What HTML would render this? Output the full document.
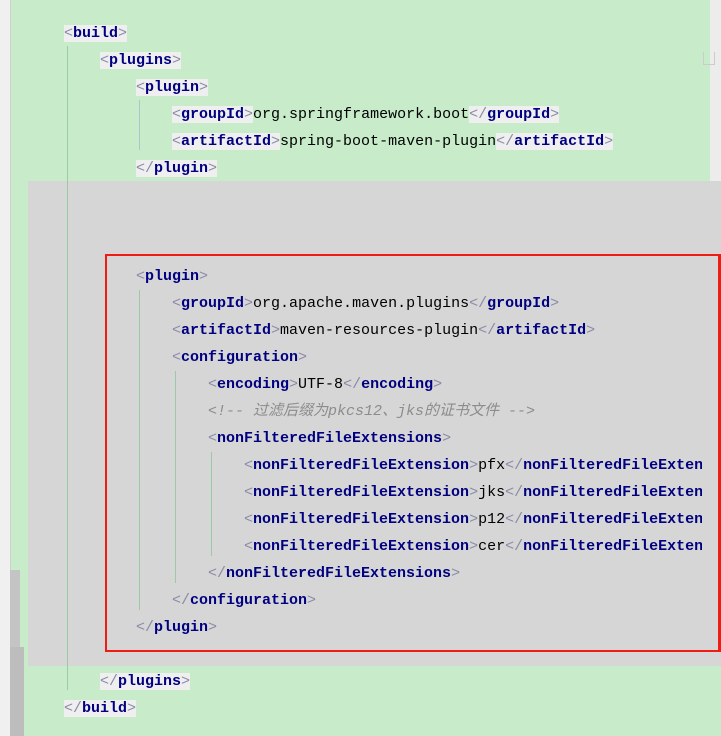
<!DOCTYPE html>
<html><head><meta charset="utf-8"><style>
body{margin:0;width:721px;height:736px;overflow:hidden;background:#c8ecca;position:relative;font-family:"Liberation Mono","Noto Sans CJK SC",monospace;font-size:15px}
.g{position:absolute;left:0;top:0;width:10px;height:736px;background:#f0f0f0;border-right:1px solid #d0d0d0}
.r{position:absolute;left:710px;top:0;width:11px;height:181px;background:#ececec}
.gray{position:absolute;left:28px;top:181px;width:693px;height:485px;background:#d6d6d6}
.box{position:absolute;left:105px;top:254px;width:611px;height:394px;border:2px solid #f01c14;border-right-width:3px}
.l{position:absolute;height:27px;line-height:27px;white-space:pre;color:#000}
.t{background:#efefef}
b{color:#000080}
i.b{font-style:normal;color:#8a8aa8;font-weight:normal}
.c{color:#8c8c8c;font-style:italic}
.v{position:absolute;width:1px;background:#9ccaa6}
.v2{position:absolute;width:1px;background:#b0c4d0}
.thumb{position:absolute;left:10px;top:570px;width:10px;height:166px;background:#c4c4c4}
.thumb2{position:absolute;left:10px;top:647px;width:14px;height:89px;background:#bdbdbd}
</style></head><body>
<div class="g"></div><div class="r"></div>
<div style="position:absolute;left:703px;top:52px;width:10px;height:12px;border:1px solid #ccc;border-top:none"></div>
<div class="gray"></div>
<div class="thumb"></div><div class="thumb2"></div>
<div class="v" style="left:67px;top:46px;height:644px"></div>
<div class="v2" style="left:139px;top:100px;height:50px"></div>
<div class="v" style="left:139px;top:290px;height:320px"></div>
<div class="v" style="left:175px;top:371px;height:212px"></div>
<div class="v" style="left:211px;top:452px;height:104px"></div>
<div class="box"></div>

<div class="l" style="left:64px;top:20px"><span class="t"><i class="b">&lt;</i><b>build</b><i class="b">&gt;</i></span></div>
<div class="l" style="left:100px;top:47px"><span class="t"><i class="b">&lt;</i><b>plugins</b><i class="b">&gt;</i></span></div>
<div class="l" style="left:136px;top:74px"><span class="t"><i class="b">&lt;</i><b>plugin</b><i class="b">&gt;</i></span></div>
<div class="l" style="left:172px;top:101px"><span class="t"><i class="b">&lt;</i><b>groupId</b><i class="b">&gt;</i></span>org.springframework.boot<span class="t"><i class="b">&lt;/</i><b>groupId</b><i class="b">&gt;</i></span></div>
<div class="l" style="left:172px;top:128px"><span class="t"><i class="b">&lt;</i><b>artifactId</b><i class="b">&gt;</i></span>spring-boot-maven-plugin<span class="t"><i class="b">&lt;/</i><b>artifactId</b><i class="b">&gt;</i></span></div>
<div class="l" style="left:136px;top:155px"><span class="t"><i class="b">&lt;/</i><b>plugin</b><i class="b">&gt;</i></span></div>

<div class="l" style="left:136px;top:263px"><i class="b">&lt;</i><b>plugin</b><i class="b">&gt;</i></div>
<div class="l" style="left:172px;top:290px"><i class="b">&lt;</i><b>groupId</b><i class="b">&gt;</i>org.apache.maven.plugins<i class="b">&lt;/</i><b>groupId</b><i class="b">&gt;</i></div>
<div class="l" style="left:172px;top:317px"><i class="b">&lt;</i><b>artifactId</b><i class="b">&gt;</i>maven-resources-plugin<i class="b">&lt;/</i><b>artifactId</b><i class="b">&gt;</i></div>
<div class="l" style="left:172px;top:344px"><i class="b">&lt;</i><b>configuration</b><i class="b">&gt;</i></div>
<div class="l" style="left:208px;top:371px"><i class="b">&lt;</i><b>encoding</b><i class="b">&gt;</i>UTF-8<i class="b">&lt;/</i><b>encoding</b><i class="b">&gt;</i></div>
<div class="l c" style="left:208px;top:398px">&lt;!-- 过滤后缀为pkcs12、jks的证书文件 --&gt;</div>
<div class="l" style="left:208px;top:425px"><i class="b">&lt;</i><b>nonFilteredFileExtensions</b><i class="b">&gt;</i></div>
<div class="l" style="left:244px;top:452px;width:458px;overflow:hidden"><i class="b">&lt;</i><b>nonFilteredFileExtension</b><i class="b">&gt;</i>pfx<i class="b">&lt;/</i><b>nonFilteredFileExtension</b></div>
<div class="l" style="left:244px;top:479px;width:458px;overflow:hidden"><i class="b">&lt;</i><b>nonFilteredFileExtension</b><i class="b">&gt;</i>jks<i class="b">&lt;/</i><b>nonFilteredFileExtension</b></div>
<div class="l" style="left:244px;top:506px;width:458px;overflow:hidden"><i class="b">&lt;</i><b>nonFilteredFileExtension</b><i class="b">&gt;</i>p12<i class="b">&lt;/</i><b>nonFilteredFileExtension</b></div>
<div class="l" style="left:244px;top:533px;width:458px;overflow:hidden"><i class="b">&lt;</i><b>nonFilteredFileExtension</b><i class="b">&gt;</i>cer<i class="b">&lt;/</i><b>nonFilteredFileExtension</b></div>
<div class="l" style="left:208px;top:560px"><i class="b">&lt;/</i><b>nonFilteredFileExtensions</b><i class="b">&gt;</i></div>
<div class="l" style="left:172px;top:587px"><i class="b">&lt;/</i><b>configuration</b><i class="b">&gt;</i></div>
<div class="l" style="left:136px;top:614px"><i class="b">&lt;/</i><b>plugin</b><i class="b">&gt;</i></div>

<div class="l" style="left:100px;top:668px"><span class="t"><i class="b">&lt;/</i><b>plugins</b><i class="b">&gt;</i></span></div>
<div class="l" style="left:64px;top:695px"><span class="t"><i class="b">&lt;/</i><b>build</b><i class="b">&gt;</i></span></div>
</body></html>
